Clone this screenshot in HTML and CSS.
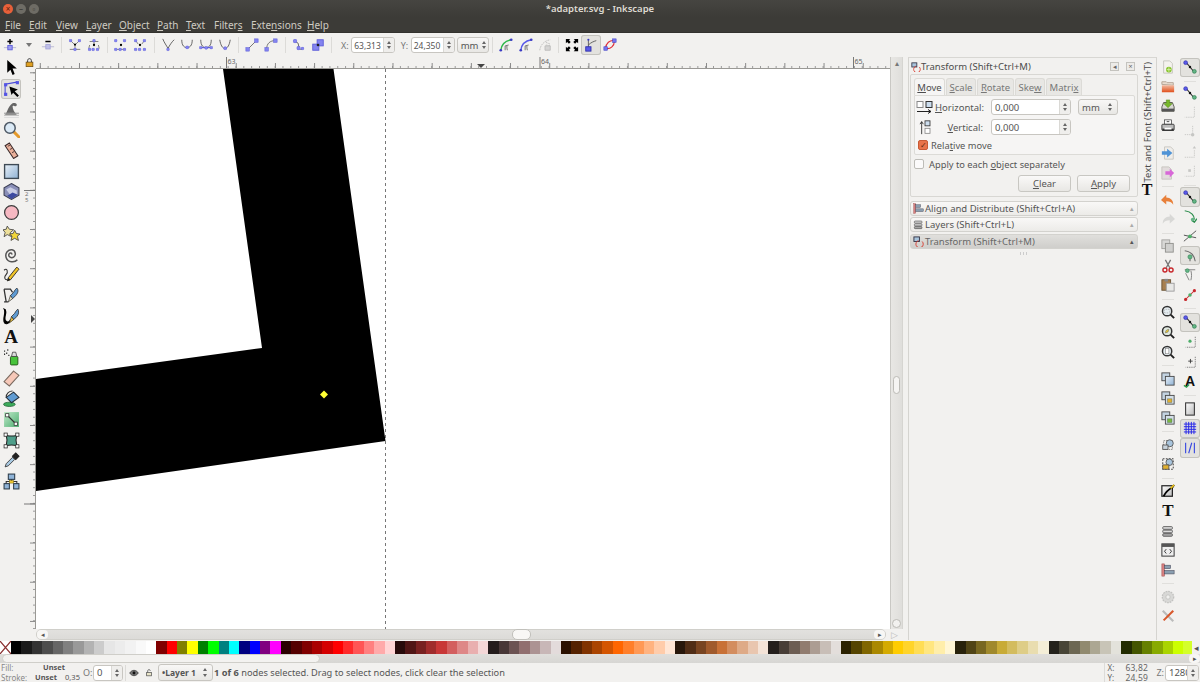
FILE: index.html
```html
<!DOCTYPE html>
<html lang="en">
<head>
<meta charset="utf-8">
<title>*adapter.svg - Inkscape</title>
<link rel="stylesheet" href="styles.css">
</head>
<body>
<svg class="sprite" xmlns="http://www.w3.org/2000/svg">
<defs>
<linearGradient id="gb" x1="0" y1="0" x2="1" y2="1"><stop offset="0" stop-color="#e8f0f8"/><stop offset="1" stop-color="#8fb2d4"/></linearGradient>
<linearGradient id="gg" x1="0" y1="0" x2="1" y2="1"><stop offset="0" stop-color="#bfe8c8"/><stop offset="1" stop-color="#4fae72"/></linearGradient>
<linearGradient id="go" x1="0" y1="0" x2="0" y2="1"><stop offset="0" stop-color="#f2b9a0"/><stop offset="1" stop-color="#e0501c"/></linearGradient>
<linearGradient id="gd" x1="0" y1="0" x2="1" y2="1"><stop offset="0" stop-color="#fff"/><stop offset="1" stop-color="#bbb"/></linearGradient>
<symbol id="dot" viewBox="0 0 4 4"><circle cx="2" cy="2" r="1.7" fill="#8484f0" stroke="#5a5ad8" stroke-width=".5"/></symbol>

<symbol id="n-add" viewBox="0 0 16 16"><path d="M8 1v6M5 4h6" stroke="#000" stroke-width="1.700"/><path d="M1 11h14" stroke="#b4b4d0"/><rect x="5.500" y="8.500" width="5" height="5" fill="#9c9cf2" stroke="#5a5ad8"/></symbol>
<symbol id="n-del" viewBox="0 0 16 16"><path d="M5 4h6" stroke="#000" stroke-width="1.700"/><path d="M1 10h14" stroke="#b4b4d0"/><rect x="5.500" y="7.500" width="5" height="5" fill="#c0c0e8" stroke="#a4a4d8"/></symbol>
<symbol id="n-join" viewBox="0 0 16 16"><path d="M3 3 8 8l5-5M8 8v4M2 13h12" stroke="#555" fill="none" stroke-width=".8"/><use href="#dot" x="1" y="1" width="4" height="4"/><use href="#dot" x="11" y="1" width="4" height="4"/><use href="#dot" x="6" y="11" width="4" height="4"/><circle cx="8" cy="7.500" r="1.300"/></symbol>
<symbol id="n-break" viewBox="0 0 16 16"><path d="M8 2v5M3 4h10M3 8l-1 4M13 8l1 4" stroke="#555" fill="none" stroke-width=".8"/><use href="#dot" x="6" y="1" width="4" height="4"/><use href="#dot" x="1" y="11" width="4" height="4"/><use href="#dot" x="5" y="11" width="4" height="4"/><use href="#dot" x="10" y="11" width="4" height="4"/><circle cx="8" cy="8" r="1.300"/></symbol>
<symbol id="n-joinseg" viewBox="0 0 16 16"><path d="M3 13H13" stroke="#555" stroke-width=".8"/><use href="#dot" x="0" y="1" width="4" height="4"/><use href="#dot" x="10" y="1" width="4" height="4"/><use href="#dot" x="0" y="11" width="4" height="4"/><use href="#dot" x="5" y="11" width="4" height="4"/><use href="#dot" x="10" y="11" width="4" height="4"/><circle cx="8" cy="8" r="1.300"/></symbol>
<symbol id="n-delseg" viewBox="0 0 16 16"><path d="M3 3l3 4M13 3l-3 4" stroke="#555" stroke-width=".8"/><use href="#dot" x="1" y="1" width="4" height="4"/><use href="#dot" x="11" y="1" width="4" height="4"/><use href="#dot" x="1" y="11" width="4" height="4"/><use href="#dot" x="5.500" y="11" width="4" height="4"/><use href="#dot" x="11" y="11" width="4" height="4"/><circle cx="8" cy="8" r="1.300"/></symbol>
<symbol id="c-cusp" viewBox="0 0 16 16"><path d="M2 1c2 5 4 7 6 11M15 2c-3 3-5 6-7 10" stroke="#555" fill="none"/><use href="#dot" x="6" y="11" width="4" height="4"/></symbol>
<symbol id="c-smooth" viewBox="0 0 16 16"><path d="M2 2c0 7 3 9 6 9s6-2 6-9" stroke="#555" fill="none"/><use href="#dot" x="6" y="8.500" width="4.400" height="4.400"/></symbol>
<symbol id="c-sym" viewBox="0 0 16 16"><path d="M2 2c0 7 3 9 6 9s6-2 6-9" stroke="#555" fill="none"/><path d="M2 11h12" stroke="#5a5ad8" stroke-width="1.300"/><use href="#dot" x="0" y="9" width="4" height="4"/><use href="#dot" x="6" y="9" width="4.400" height="4.400"/><use href="#dot" x="12" y="9" width="4" height="4"/></symbol>
<symbol id="c-auto" viewBox="0 0 16 16"><path d="M2 2c1 6 3 10 6 10s5-4 6-10" stroke="#555" fill="none"/><use href="#dot" x="6" y="9.500" width="4.400" height="4.400"/></symbol>
<symbol id="s-line" viewBox="0 0 16 16"><path d="M3 13 13 3" stroke="#666" stroke-width="1"/><rect x="1" y="11" width="4" height="4" fill="#8484f0" stroke="#5a5ad8" stroke-width=".6"/><rect x="11" y="1" width="4" height="4" fill="#8484f0" stroke="#5a5ad8" stroke-width=".6"/></symbol>
<symbol id="s-curve" viewBox="0 0 16 16"><path d="M3 13C3 6 7 3 13 3" stroke="#666" fill="none"/><rect x="1" y="11" width="4" height="4" fill="#8484f0" stroke="#5a5ad8" stroke-width=".6"/><rect x="11" y="1" width="4" height="4" fill="#8484f0" stroke="#5a5ad8" stroke-width=".6"/></symbol>
<symbol id="o-topath" viewBox="0 0 16 16"><path d="M4 4l3 2 1 5c1 3 4 2 4 1" stroke="#555" fill="none"/><use href="#dot" x="1" y="1" width="5" height="5"/><use href="#dot" x="5" y="9" width="5" height="5"/><use href="#dot" x="10" y="10" width="4" height="4"/></symbol>
<symbol id="o-stroke" viewBox="0 0 16 16"><rect x="7" y="2" width="7" height="7" fill="#8484f0" stroke="#5a5ad8"/><rect x="2" y="7" width="7" height="7" fill="#8484f0" stroke="#5a5ad8"/><circle cx="8" cy="8" r="1.500" fill="#222"/></symbol>
<symbol id="e-path" viewBox="0 0 16 16"><path d="M2 14C3 7 8 3 14 2" stroke="#2fb84b" fill="none" stroke-width="1.600"/><path d="M7 14V9l4-1M9 9c0 2 0 3 .5 5" stroke="#666" fill="none"/><circle cx="2" cy="14" r="1.500" fill="#3a3ac4"/><circle cx="14" cy="2" r="1.500" fill="#3a3ac4"/></symbol>
<symbol id="e-mask" viewBox="0 0 16 16"><path d="M2 14C3 7 8 3 14 2" stroke="#5858e8" fill="none" stroke-width="1.600"/><path d="M7 14V9l4-1M9 9c0 2 0 3 .5 5" stroke="#666" fill="none"/><circle cx="2" cy="14" r="1.500" fill="#3a3ac4"/><circle cx="14" cy="2" r="1.500" fill="#3a3ac4"/></symbol>
<symbol id="e-lpe" viewBox="0 0 16 16" opacity=".5"><path d="M2 14C3 7 8 3 14 2M9 5l5 2M9 8l5 1" stroke="#888" fill="none" stroke-dasharray="2 1"/><path d="M8 14V9h6v5z" fill="#bbb" stroke="#888"/></symbol>
<symbol id="v-trans" viewBox="0 0 16 16"><path d="M1 1l5 0-1.500 1.500 2 2-2 2-2-2L1 6zM15 1v5l-1.500-1.500-2 2-2-2 2-2L10 1zM1 15v-5l1.500 1.500 2-2 2 2-2 2L6 15zM15 15h-5l1.500-1.500-2-2 2-2 2 2L15 10z" fill="#000"/></symbol>
<symbol id="v-handle" viewBox="0 0 16 16"><path d="M5 11V2M5 8c3-3 6-4 9-5" stroke="#555" fill="none"/><rect x="2" y="10" width="6" height="5" fill="#5a5ae8" stroke="#2c2ca8"/><circle cx="5" cy="2" r="1.200" fill="#3a3ac4"/></symbol>
<symbol id="v-outline" viewBox="0 0 16 16"><path d="M3 12C3 6 8 2 13 3c0 6-4 10-10 9z" fill="none" stroke="#e0303a" stroke-width="1.300"/><rect x="1" y="10" width="4" height="4" fill="#7474ee" stroke="#3a3ac4" stroke-width=".6"/><rect x="11" y="1" width="4" height="4" fill="#7474ee" stroke="#3a3ac4" stroke-width=".6"/></symbol>

<symbol id="t-select" viewBox="0 0 16 16"><path d="M4 1v12l3-3 2 5 2-1-2-5h4z"/></symbol>
<symbol id="t-node" viewBox="0 0 16 16"><path d="M2 14V4l11-2" stroke="#4848d8" fill="none"/><rect x="1" y="3" width="3" height="3" fill="#5454e4"/><rect x="12" y="1" width="3" height="3" fill="#5454e4"/><rect x="1" y="12" width="3" height="3" fill="#5454e4"/><path d="M6 6l8 3-3 1.500 4 4-1.500 1.500-4-4L8 14z"/></symbol>
<symbol id="t-tweak" viewBox="0 0 16 16"><path d="M1 13C4 13 4 5 9 2c4-1 5 2 3 3-2 0-2-1-3 0 0 3 2 6 4 8z" fill="#666"/><rect x="1" y="11" width="14" height="1" fill="#999"/><rect x="1" y="13" width="14" height="1" fill="#bbb"/><rect x="1" y="15" width="14" height="1" fill="#ddd"/></symbol>
<symbol id="t-zoom" viewBox="0 0 16 16"><path d="M10 10l5 5" stroke="#e49a2c" stroke-width="2.800" stroke-linecap="round"/><circle cx="6.500" cy="6.500" r="5" fill="#dbeaf6" stroke="#4f5a66" stroke-width="1.400"/></symbol>
<symbol id="t-measure" viewBox="0 0 16 16"><path d="M6 1l8 12-4 2.500L2 3.500z" fill="#eab09a" stroke="#3a2a2a"/><path d="M4.500 4l2-1M6.500 7l2-1M8.500 10l2-1" stroke="#3a2a2a" stroke-width=".8"/></symbol>
<symbol id="t-rect" viewBox="0 0 16 16"><rect x="1.500" y="1.500" width="13" height="13" fill="url(#gb)" stroke="#3e4a55" stroke-width="1.300"/></symbol>
<symbol id="t-3d" viewBox="0 0 16 16"><path d="M8 .5l7 4v7l-7 4-7-4v-7z" fill="#8a8fb8" stroke="#3d4055"/><path d="M3 6l4-2 6 3v4l-5 3-2-4z" fill="#c8cce4"/><path d="M4 12l5-3 5 2-6 4z" fill="#3c4aa0"/></symbol>
<symbol id="t-circle" viewBox="0 0 16 16"><circle cx="8" cy="8" r="6.500" fill="#f6b8c2" stroke="#3e3e3e" stroke-width="1.200"/></symbol>
<symbol id="t-star" viewBox="0 0 16 16"><path d="M4 1l2 3 4 .5-3 2.500 1 4-4-2-3 2 1-4-2-2.500 3-.5z" fill="#eee09a" stroke="#444" stroke-width=".8"/><path d="M11 5l1.500 3 3.500.5-2.500 2 1 4-3.500-2-3.500 2 1-4-2.500-2 3.500-.5z" fill="#f2d63a" stroke="#444" stroke-width=".8"/></symbol>
<symbol id="t-spiral" viewBox="0 0 16 16"><path d="M8 8c1-1.500-2-2-2.500 0s2 4 4.500 2.500 2-6.500-1.500-7-7 3-5.500 7.500 8 5 10.500 2" fill="none" stroke="#555" stroke-width="1.400"/></symbol>
<symbol id="t-pencil" viewBox="0 0 16 16"><path d="M1 4c3-3 4 2 2 4s-2 5 1 5" fill="none" stroke="#333"/><path d="M13 1l2 2-8 10-3 1 1-3z" fill="#f0c428" stroke="#222" stroke-width=".8"/><path d="M4 14l1-3 2 2z" fill="#222"/></symbol>
<symbol id="t-pen" viewBox="0 0 16 16"><path d="M1 2h6l2 3M3 14L1 2M1 14h4" fill="none" stroke="#333" stroke-width="1.200"/><path d="M13 1c2 2 1 5-1 7l-3 3-1-1-1-2 3-3c1-2 2-3 3-4z" fill="#5f9bd2" stroke="#222" stroke-width=".7"/><path d="M7 8l2 3-4 3z" fill="#e8e4c8" stroke="#222" stroke-width=".6"/></symbol>
<symbol id="t-callig" viewBox="0 0 16 16"><path d="M1 1c4 1 0 6 1 10 1 3 4 3 5 0-1 4-5 5-6 2C0 8 3 4 1 1z" fill="#000" stroke="#000" stroke-width="1"/><path d="M14 1c1 2 1 5-1 7l-3 3-2-3 3-3c1-2 2-3 3-4z" fill="#5f9bd2" stroke="#222" stroke-width=".7"/><path d="M8 8l2 3-4 3z" fill="#e8c040" stroke="#222" stroke-width=".6"/></symbol>
<symbol id="t-spray" viewBox="0 0 16 16"><rect x="7" y="7" width="7" height="8" rx="1" fill="#47c23a" stroke="#1c4c12" stroke-width=".8"/><path d="M9 3h3l1 4H8z" fill="#ddd" stroke="#333" stroke-width=".7"/><path d="M1 2h1M3 4h1M1 5h1M4 1h1M5 6h1" stroke="#222" stroke-width="1.300"/></symbol>
<symbol id="t-eraser" viewBox="0 0 16 16"><path d="M10 1l5 4-9 10-5-4z" fill="#f6c8b8" stroke="#7a6a60"/></symbol>
<symbol id="t-bucket" viewBox="0 0 16 16"><ellipse cx="6" cy="13.500" rx="5.500" ry="2" fill="#3cab5a" stroke="#1d5e30" stroke-width=".7"/><path d="M3 7l7-5 5 5-7 5z" fill="#5f9bd2" stroke="#22303e"/><path d="M3 7c0-4 3-6 6-6" fill="none" stroke="#333"/></symbol>
<symbol id="t-grad" viewBox="0 0 16 16"><rect x="1" y="1" width="14" height="14" fill="url(#gg)"/><path d="M4 4l8 8" stroke="#333"/><rect x="2.500" y="2.500" width="3" height="3" fill="#fff" stroke="#333" stroke-width=".7"/><rect x="10.500" y="10.500" width="3" height="3" fill="#fff" stroke="#333" stroke-width=".7"/></symbol>
<symbol id="t-mesh" viewBox="0 0 16 16"><path d="M3 3c3 1 7 1 10 0-1 3-1 7 0 10-3-1-7-1-10 0 1-3 1-7 0-10z" fill="#4f9e8a" stroke="#222"/><g fill="#fff" stroke="#222" stroke-width=".7"><rect x="1" y="1" width="3" height="3"/><rect x="12" y="1" width="3" height="3"/><rect x="1" y="12" width="3" height="3"/><rect x="12" y="12" width="3" height="3"/></g></symbol>
<symbol id="t-dropper" viewBox="0 0 16 16"><path d="M2 14l1-3 6-6 2 2-6 6z" fill="#a8c8e0" stroke="#333" stroke-width=".8"/><path d="M9 4l3-3 3 3-3 3z" fill="#222" stroke="#222"/></symbol>
<symbol id="t-conn" viewBox="0 0 16 16"><path d="M8 5v3M3 11V8h10v3" fill="none" stroke="#333"/><rect x="5" y="1" width="6" height="5" fill="#8fb4d8" stroke="#2d3c4a"/><rect x="6" y="7" width="4" height="2.500" fill="#f0c830" stroke="#7a6a10" stroke-width=".5"/><rect x="1" y="10" width="5" height="5" fill="#8fb4d8" stroke="#2d3c4a"/><rect x="10" y="10" width="5" height="5" fill="#8fb4d8" stroke="#2d3c4a"/></symbol>

<symbol id="r-new" viewBox="0 0 16 16"><path d="M3 1h7l3 3v11H3z" fill="#f4f2ee" stroke="#c4c2bc"/><circle cx="9" cy="11" r="3.200" fill="#86c42c"/><path d="M9 8.500v5M6.500 11h5" stroke="#d8f0a8"/></symbol>
<symbol id="r-open" viewBox="0 0 16 16"><path d="M1 5V2h5l1 1h7v3z" fill="#e8dcd0" stroke="#b0a090"/><rect x="1" y="6" width="14" height="8" fill="url(#go)"/></symbol>
<symbol id="r-save" viewBox="0 0 16 16"><path d="M1 9l2-5h10l2 5v5H1z" fill="#d8d8d2" stroke="#505048"/><rect x="1" y="11" width="14" height="3" fill="#555"/><path d="M6 1h4v4h3l-5 5-5-5h3z" fill="#76b82a" stroke="#4c8010" stroke-width=".5"/></symbol>
<symbol id="r-print" viewBox="0 0 16 16"><rect x="4" y="1" width="8" height="5" fill="#fff" stroke="#333" stroke-width=".8"/><rect x="1" y="6" width="14" height="7" rx="1" fill="#bbb" stroke="#333"/><rect x="1.500" y="11" width="13" height="2.500" fill="#333"/><rect x="4" y="10" width="8" height="2" fill="#fff"/><path d="M6.500 3h3" stroke="#333"/></symbol>
<symbol id="r-import" viewBox="0 0 16 16"><path d="M4 1h7l3 3v11H4z" fill="#efedea" stroke="#c6c4be"/><path d="M1 6h6V3l6 5-6 5v-3H1z" fill="#4f93d6"/></symbol>
<symbol id="r-export" viewBox="0 0 16 16"><path d="M1 1h8l3 3v11H1z" fill="#e2dcdc" stroke="#c6c4be"/><path d="M5 6h5V3l5 5-5 5v-3H5z" fill="#d868d8"/></symbol>
<symbol id="r-undo" viewBox="0 0 16 16"><path d="M6 2L0 8l6 5V9.500c4 0 6 1 8 4 0-6-3-8-8-8.500z" fill="#e8803a"/></symbol>
<symbol id="r-redo" viewBox="0 0 16 16"><path d="M10 2l6 6-6 5V9.500c-4 0-6 1-8 4 0-6 3-8 8-8.500z" fill="#d8d8d6"/></symbol>
<symbol id="r-copy" viewBox="0 0 16 16"><rect x="1" y="1" width="9" height="10" fill="#d8d8d6" stroke="#a0a09c"/><rect x="5" y="5" width="9" height="10" fill="#d0d0ce" stroke="#8e8e8a"/></symbol>
<symbol id="r-cut" viewBox="0 0 16 16"><path d="M5 1l5 9M11 1L6 10" stroke="#777" stroke-width="1.500"/><circle cx="4.500" cy="12.500" r="2.300" fill="none" stroke="#c8282c" stroke-width="1.600"/><circle cx="11.500" cy="12.500" r="2.300" fill="none" stroke="#c8282c" stroke-width="1.600"/></symbol>
<symbol id="r-paste" viewBox="0 0 16 16"><rect x="1" y="2" width="10" height="12" fill="#a88050" stroke="#685030"/><rect x="4" y="1" width="4" height="3" fill="#888"/><rect x="6" y="6" width="9" height="9" fill="#e8e8e6" stroke="#999"/></symbol>
<symbol id="r-z1" viewBox="0 0 16 16"><circle cx="7" cy="7" r="5.300" fill="#e4ecf0" stroke="#333" stroke-width="1.700"/><path d="M11 11l4 4" stroke="#222" stroke-width="2.200"/><rect x="4" y="5" width="6" height="4" fill="none" stroke="#999" stroke-width=".7" stroke-dasharray="1 1"/></symbol>
<symbol id="r-z2" viewBox="0 0 16 16"><circle cx="7" cy="7" r="5.300" fill="#dfe8e0" stroke="#333" stroke-width="1.700"/><path d="M11 11l4 4" stroke="#222" stroke-width="2.200"/><path d="M5 9c0-3 2-4 4-4l-1 3z" fill="#e8c838" stroke="#555" stroke-width=".5"/></symbol>
<symbol id="r-z3" viewBox="0 0 16 16"><circle cx="7" cy="7" r="5.300" fill="#e4ecf0" stroke="#333" stroke-width="1.700"/><path d="M11 11l4 4" stroke="#222" stroke-width="2.200"/><rect x="5" y="4" width="4" height="6" fill="#fff" stroke="#888" stroke-width=".7"/></symbol>
<symbol id="r-dup" viewBox="0 0 16 16"><rect x="1" y="1" width="9" height="9" fill="#c4d4e2" stroke="#444"/><rect x="5" y="5" width="10" height="10" fill="url(#gb)" stroke="#444"/></symbol>
<symbol id="r-clone" viewBox="0 0 16 16"><rect x="1" y="1" width="9" height="9" fill="#c4d4e2" stroke="#444"/><rect x="5" y="5" width="10" height="10" fill="#d4dfe8" stroke="#444"/><rect x="7.500" y="9" width="5" height="4" fill="#e0b030" stroke="#664" stroke-width=".5"/></symbol>
<symbol id="r-unclone" viewBox="0 0 16 16"><rect x="1" y="1" width="9" height="9" fill="#c4d4e2" stroke="#444"/><rect x="5" y="5" width="10" height="10" fill="#d4dfe8" stroke="#444"/><rect x="7.500" y="9" width="5" height="4" fill="#7cb840" stroke="#464" stroke-width=".5"/></symbol>
<symbol id="r-group" viewBox="0 0 16 16"><path d="M3 3h10v10H3z" fill="none" stroke="#777" stroke-dasharray="1.500 1"/><circle cx="10" cy="6" r="4" fill="#a8c4dc" stroke="#555"/><rect x="2" y="8" width="6" height="5" fill="#c8d4de" stroke="#555"/></symbol>
<symbol id="r-ungroup" viewBox="0 0 16 16"><path d="M2 2h12v12H2z" fill="none" stroke="#333" stroke-dasharray="2 1.500"/><circle cx="9.500" cy="6" r="3.800" fill="#a8c4dc" stroke="#555"/><rect x="2" y="9" width="7" height="5" fill="#e0b030" stroke="#555"/></symbol>
<symbol id="r-fill" viewBox="0 0 16 16"><rect x="1" y="2" width="12" height="12" fill="url(#gd)" stroke="#222" stroke-width="1.400"/><path d="M3 14c2-4 6-8 10-10L15 1" stroke="#000" stroke-width="2" fill="none"/><path d="M11 5l4-4" stroke="#e8c020" stroke-width="2"/></symbol>
<symbol id="r-layers" viewBox="0 0 16 16"><g fill="#ddd" stroke="#555"><rect x="2" y="3" width="11" height="3" rx="1"/><rect x="2" y="7" width="11" height="3" rx="1"/><rect x="2" y="11" width="11" height="3" rx="1" fill="#aaa"/></g></symbol>
<symbol id="r-xml" viewBox="0 0 16 16"><rect x="1" y="1" width="14" height="14" fill="#eee" stroke="#444" stroke-width="1.200"/><rect x="1" y="1" width="14" height="3.500" fill="#555"/><path d="M6 7L4 9.500 6 12M10 7l2 2.500-2 2.500" stroke="#222" fill="none"/></symbol>
<symbol id="r-align" viewBox="0 0 16 16"><rect x="1" y="1" width="3" height="14" fill="#d88080" stroke="#a05050" stroke-width=".6"/><rect x="4" y="2.500" width="7" height="4" fill="#8a9eb0" stroke="#445" stroke-width=".6"/><rect x="4" y="8.500" width="11" height="4" fill="#8a9eb0" stroke="#445" stroke-width=".6"/></symbol>
<symbol id="r-gear" viewBox="0 0 16 16"><circle cx="8" cy="8" r="6.500" fill="#d8d8d6" stroke="#c2c2c0" stroke-width="1.500" stroke-dasharray="2 1"/><circle cx="8" cy="8" r="2.500" fill="#f0f0ee" stroke="#c2c2c0"/></symbol>
<symbol id="r-tools" viewBox="0 0 16 16"><path d="M2 2l12 12" stroke="#bbb" stroke-width="2.400"/><path d="M14 2L3 13" stroke="#d8582c" stroke-width="2.400"/></symbol>

<symbol id="sn-main" viewBox="0 0 16 16"><path d="M3 2l10 12" stroke="#222" stroke-width="1.200"/><circle cx="8" cy="8" r="1.400" fill="#111"/><circle cx="3" cy="3" r="2.200" fill="#5a5ae8" stroke="#2c2ca8" stroke-width=".7"/><circle cx="13" cy="13" r="2.200" fill="#62b484" stroke="#2d7a4c" stroke-width=".7"/></symbol>
<symbol id="sn-bb" viewBox="0 0 16 16"><path d="M13 2v12H2" fill="none" stroke="#c6c6c4" stroke-dasharray="1.500 1"/></symbol>
<symbol id="sn-bbe" viewBox="0 0 16 16"><path d="M11 1v10H1" fill="none" stroke="#c6c6c4" stroke-dasharray="1.500 1"/><circle cx="11" cy="11" r="2" fill="#c6c6c4"/></symbol>
<symbol id="sn-bbm" viewBox="0 0 16 16"><path d="M13 6v8H2" fill="none" stroke="#c6c6c4" stroke-dasharray="1.500 1"/><path d="M13 1l2 3h-4z" fill="#c6c6c4"/></symbol>
<symbol id="sn-bbc" viewBox="0 0 16 16"><path d="M13 2v12H2" fill="none" stroke="#c6c6c4" stroke-dasharray="1.500 1"/><rect x="6" y="6" width="3" height="3" fill="#c6c6c4"/></symbol>
<symbol id="sn-path" viewBox="0 0 16 16"><path d="M2 2c8 1 11 6 11 10" fill="none" stroke="#2c8c4c" stroke-width="1.400"/><path d="M10 13l3 2 3-4" fill="none" stroke="#2c8c4c" stroke-width="1.600"/><circle cx="11" cy="12" r="2" fill="#62b484"/></symbol>
<symbol id="sn-int" viewBox="0 0 16 16"><path d="M1 14L15 2M1 7l14 3" stroke="#444"/><circle cx="8" cy="8.500" r="2.200" fill="#4cae68"/></symbol>
<symbol id="sn-norm" viewBox="0 0 16 16"><path d="M2 2c7 1 11 5 12 12M8 14V8" fill="none" stroke="#666" stroke-width="1.200"/><circle cx="8" cy="9" r="2.400" fill="#62b484" stroke="#2d7a4c" stroke-width=".6"/></symbol>
<symbol id="sn-tan" viewBox="0 0 16 16"><path d="M2 2h12M9 3c1 4 1 7 0 11M3 6l4 8" stroke="#777" fill="none"/><circle cx="5" cy="3" r="2.200" fill="#62b484" stroke="#2d7a4c" stroke-width=".6"/></symbol>
<symbol id="sn-cusp" viewBox="0 0 16 16"><path d="M2 14L14 2" stroke="#c8282c" stroke-width="1.200"/><circle cx="3" cy="13" r="1.800" fill="#c8282c"/><circle cx="8" cy="8" r="2" fill="#4cae68"/><circle cx="13" cy="3" r="1.800" fill="#c8282c"/></symbol>
<symbol id="sn-cen" viewBox="0 0 16 16"><path d="M14 2v12H3" fill="none" stroke="#777" stroke-dasharray="1.500 1"/><circle cx="8" cy="7" r="1.800" fill="#4cae68"/></symbol>
<symbol id="sn-rot" viewBox="0 0 16 16"><path d="M14 2v12H3" fill="none" stroke="#777" stroke-dasharray="1.500 1"/><path d="M6 7h5M8.500 4.500v5" stroke="#333"/></symbol>
<symbol id="sn-text" viewBox="0 0 16 16"><text x="8" y="14" text-anchor="middle" font-family="Liberation Sans" font-weight="700" font-size="16" fill="#111">A</text><path d="M1 13l3 2 3-3" fill="none" stroke="#2c9c4c" stroke-width="1.500"/></symbol>
<symbol id="sn-page" viewBox="0 0 16 16"><rect x="3" y="1" width="10" height="14" fill="url(#gd)" stroke="#333" stroke-width="1.200"/></symbol>
<symbol id="sn-grid" viewBox="0 0 16 16"><path d="M3.500 1v14M6.500 1v14M9.500 1v14M12.500 1v14M1 3.500h14M1 6.500h14M1 9.500h14M1 12.500h14" stroke="#2424e8" stroke-width="1.100"/></symbol>
<symbol id="sn-guide" viewBox="0 0 16 16"><path d="M3 2v12M6.500 14L10 2M13 2v12" stroke="#3a4ae0" stroke-width="1.300"/></symbol>
<symbol id="p-move-h" viewBox="0 0 18 14"><rect x="1" y="1" width="6" height="6" fill="#fff" stroke="#888"/><rect x="10" y="1" width="6" height="6" fill="#cde" stroke="#333"/><path d="M1 11h14M12 9l3 2-3 2" fill="none" stroke="#222"/></symbol>
<symbol id="p-move-v" viewBox="0 0 16 18"><rect x="8" y="1" width="6" height="6" fill="#cde" stroke="#333"/><rect x="8" y="10" width="6" height="6" fill="#fff" stroke="#888"/><path d="M4 17V2M2 5l2-3 2 3" fill="none" stroke="#222"/></symbol>
<symbol id="p-transform" viewBox="0 0 12 12"><rect x="1" y="1" width="6" height="5" fill="#a8c4dc" stroke="#334"/><path d="M10 6a4 4 0 1 1-4-1" fill="none" stroke="#d8382c"/></symbol>
<symbol id="p-eye" viewBox="0 0 14 10"><path d="M1 5c3-5 9-5 12 0-3 5-9 5-12 0z" fill="#777" stroke="#333"/><circle cx="7" cy="5" r="2" fill="#111"/></symbol>
<symbol id="p-lock" viewBox="0 0 12 12"><rect x="2.500" y="6" width="7" height="5" fill="#e8e4c8" stroke="#444"/><path d="M4 6V3.500C4 1 8 1 8 3.500" fill="none" stroke="#444"/></symbol>
<symbol id="p-rlock" viewBox="0 0 12 12"><rect x="1.500" y="5.500" width="9" height="6" fill="#e0a020" stroke="#6a4a10"/><path d="M3.500 5.500V3.500C3.500 0 8.500 0 8.500 3.500v2" fill="none" stroke="#333" stroke-width="1.300"/></symbol>
</defs>
</svg>

<div class="app">
  <header class="titlebar">
    <div class="winbtns"><span class="wb wb-close">×</span><span class="wb">–</span><span class="wb">▫</span></div>
    <div class="wintitle">*adapter.svg - Inkscape</div>
  </header>
  <nav class="menubar">
    <span class="m m1"><u>F</u>ile</span><span class="m m2"><u>E</u>dit</span><span class="m m3"><u>V</u>iew</span><span class="m m4"><u>L</u>ayer</span><span class="m m5"><u>O</u>bject</span><span class="m m6"><u>P</u>ath</span><span class="m m7"><u>T</u>ext</span><span class="m m8">Filter<u>s</u></span><span class="m m9">Exte<u>n</u>sions</span><span class="m m10"><u>H</u>elp</span>
  </nav>
  <div class="toolbar">
    <span class="ti"><svg class="i16"><use href="#n-add"/></svg></span><span class="ti"><span class="ddarrow"></span></span><span class="ti"><svg class="i16"><use href="#n-del"/></svg></span><i class="vsep"></i>
    <span class="ti"><svg class="i16"><use href="#n-join"/></svg></span><span class="ti"><svg class="i16"><use href="#n-break"/></svg></span><i class="vsep"></i>
    <span class="ti"><svg class="i16"><use href="#n-joinseg"/></svg></span><span class="ti"><svg class="i16"><use href="#n-delseg"/></svg></span><i class="vsep"></i>
    <span class="ti"><svg class="i16"><use href="#c-cusp"/></svg></span><span class="ti"><svg class="i16"><use href="#c-smooth"/></svg></span><span class="ti"><svg class="i16"><use href="#c-sym"/></svg></span><span class="ti"><svg class="i16"><use href="#c-auto"/></svg></span><i class="vsep"></i>
    <span class="ti"><svg class="i16"><use href="#s-line"/></svg></span><span class="ti"><svg class="i16"><use href="#s-curve"/></svg></span><i class="vsep"></i>
    <span class="ti"><svg class="i16"><use href="#o-topath"/></svg></span><span class="ti"><svg class="i16"><use href="#o-stroke"/></svg></span><i class="vsep"></i>
    <span class="flabel fl-x">X:</span><span class="spin sw-coord"><b>63,313</b><em></em></span>
    <span class="flabel fl-x">Y:</span><span class="spin sw-coord"><b>24,350</b><em></em></span>
    <span class="drop sw-unit">mm<em></em></span><i class="vsep"></i>
    <span class="ti"><svg class="i16"><use href="#e-path"/></svg></span><span class="ti"><svg class="i16"><use href="#e-mask"/></svg></span><span class="ti"><svg class="i16"><use href="#e-lpe"/></svg></span><i class="vsep"></i>
    <span class="ti"><svg class="i16"><use href="#v-trans"/></svg></span><span class="ti on"><svg class="i16"><use href="#v-handle"/></svg></span><span class="ti"><svg class="i16"><use href="#v-outline"/></svg></span>
  </div>

  <div class="middle">
    <aside class="tools">
      <span class="tl"><svg class="i16"><use href="#t-select"/></svg></span>
      <span class="tl on"><svg class="i16"><use href="#t-node"/></svg></span>
      <span class="tl"><svg class="i16"><use href="#t-tweak"/></svg></span>
      <span class="tl"><svg class="i16"><use href="#t-zoom"/></svg></span>
      <span class="tl"><svg class="i16"><use href="#t-measure"/></svg></span>
      <span class="tl"><svg class="i16"><use href="#t-rect"/></svg></span>
      <span class="tl"><svg class="i16"><use href="#t-3d"/></svg></span>
      <span class="tl"><svg class="i16"><use href="#t-circle"/></svg></span>
      <span class="tl"><svg class="i16"><use href="#t-star"/></svg></span>
      <span class="tl"><svg class="i16"><use href="#t-spiral"/></svg></span>
      <span class="tl"><svg class="i16"><use href="#t-pencil"/></svg></span>
      <span class="tl"><svg class="i16"><use href="#t-pen"/></svg></span>
      <span class="tl"><svg class="i16"><use href="#t-callig"/></svg></span>
      <span class="tl glyph-a">A</span>
      <span class="tl"><svg class="i16"><use href="#t-spray"/></svg></span>
      <span class="tl"><svg class="i16"><use href="#t-eraser"/></svg></span>
      <span class="tl"><svg class="i16"><use href="#t-bucket"/></svg></span>
      <span class="tl"><svg class="i16"><use href="#t-grad"/></svg></span>
      <span class="tl"><svg class="i16"><use href="#t-mesh"/></svg></span>
      <span class="tl"><svg class="i16"><use href="#t-dropper"/></svg></span>
      <span class="tl"><svg class="i16"><use href="#t-conn"/></svg></span>
    </aside>

    <section class="work">
      <div class="corner"><svg class="i-lock"><use href="#p-rlock"/></svg></div>
      <div class="ruler-h">
        <span class="rl rl63">63</span><span class="rl rl64">64</span><span class="rl rl65">65</span>
        <span class="mark-h"></span>
      </div>
      <div class="vscroll">
        <span class="sb-arrow">▴</span>
        <span class="sb-thumb-v"></span>
        <span class="sb-round"></span>
      </div>
      <div class="ruler-v">
        <span class="rlv">2<br>5</span>
        <span class="mark-v"></span>
      </div>
      <div class="canvas">
        <svg class="drawing" viewBox="36 69 854 560">
          <rect x="36" y="69" width="854" height="560" fill="#fff"/>
          <polygon points="223,69 333.500,69 385.500,441 36,491 36,379 262,348" fill="#000"/>
          <path d="M385.500 69V629" stroke="#777" stroke-dasharray="3 3" fill="none"/>
          <polygon points="324,390.500 328,394.500 324,398.500 320,394.500" fill="#ffff33"/>
        </svg>
      </div>
      <div class="hcell"></div>
      <div class="hscroll"><span class="sb-btn">◂</span><span class="sb-thumb-h"></span><span class="sb-btn sb-end">▸</span></div>
      <div class="zcell">▷</div>
    </section>

    <aside class="dock">
      <div class="panel">
        <div class="panel-main">
          <div class="panel-head">
            <svg class="i10"><use href="#p-transform"/></svg><span class="ph-title">Transform (Shift+Ctrl+M)</span>
            <span class="ph-btn">◂</span><span class="ph-btn">×</span>
          </div>
          <div class="frame">
            <div class="tabs">
              <span class="tab act"><u>M</u>ove</span><span class="tab"><u>S</u>cale</span><span class="tab"><u>R</u>otate</span><span class="tab">Ske<u>w</u></span><span class="tab">Matri<u>x</u></span>
            </div>
            <div class="page">
              <div class="row">
                <svg class="i-mv"><use href="#p-move-h"/></svg><label class="lb"><u>H</u>orizontal:</label>
                <span class="spin sw-val"><b>0,000</b><em></em></span><span class="drop sw-dd">mm<em></em></span>
              </div>
              <div class="row">
                <svg class="i-mv"><use href="#p-move-v"/></svg><label class="lb"><u>V</u>ertical:</label>
                <span class="spin sw-val"><b>0,000</b><em></em></span>
              </div>
              <div class="chk-row"><span class="chk on">✓</span><span>Rela<u>t</u>ive move</span></div>
            </div>
            <div class="chk-row chk-out"><span class="chk"></span><span>Apply to each <u>o</u>bject separately</span></div>
            <div class="actions"><span class="btn"><span><u>C</u>lear</span></span><span class="btn"><span><u>A</u>pply</span></span></div>
          </div>
          <div class="dock-item"><svg class="i11"><use href="#r-align"/></svg>Align and Distribute (Shift+Ctrl+A)<span class="tri">▴</span></div>
          <div class="dock-item"><svg class="i11"><use href="#r-layers"/></svg>Layers (Shift+Ctrl+L)<span class="tri">▴</span></div>
          <div class="dock-item cur"><svg class="i11"><use href="#p-transform"/></svg>Transform (Shift+Ctrl+M)<span class="tri">▴</span></div>
          <div class="grip"></div>
        </div>
        <div class="vtab"><span class="vtab-t">Text and Font (Shift+Ctrl+T)</span><span class="glyph-t small">T</span></div>
      </div>
    </aside>

    <aside class="cmd">
      <span class="ci"><svg class="i16"><use href="#r-new"/></svg></span>
      <span class="ci"><svg class="i16"><use href="#r-open"/></svg></span>
      <span class="ci"><svg class="i16"><use href="#r-save"/></svg></span>
      <span class="ci"><svg class="i16"><use href="#r-print"/></svg></span><i class="hsep"></i>
      <span class="ci"><svg class="i16"><use href="#r-import"/></svg></span>
      <span class="ci"><svg class="i16"><use href="#r-export"/></svg></span><i class="hsep"></i>
      <span class="ci"><svg class="i16"><use href="#r-undo"/></svg></span>
      <span class="ci"><svg class="i16"><use href="#r-redo"/></svg></span><i class="hsep"></i>
      <span class="ci"><svg class="i16"><use href="#r-copy"/></svg></span>
      <span class="ci"><svg class="i16"><use href="#r-cut"/></svg></span>
      <span class="ci"><svg class="i16"><use href="#r-paste"/></svg></span><i class="hsep"></i>
      <span class="ci"><svg class="i16"><use href="#r-z1"/></svg></span>
      <span class="ci"><svg class="i16"><use href="#r-z2"/></svg></span>
      <span class="ci"><svg class="i16"><use href="#r-z3"/></svg></span><i class="hsep"></i>
      <span class="ci"><svg class="i16"><use href="#r-dup"/></svg></span>
      <span class="ci"><svg class="i16"><use href="#r-clone"/></svg></span>
      <span class="ci"><svg class="i16"><use href="#r-unclone"/></svg></span><i class="hsep"></i>
      <span class="ci"><svg class="i16"><use href="#r-group"/></svg></span>
      <span class="ci"><svg class="i16"><use href="#r-ungroup"/></svg></span><i class="hsep"></i>
      <span class="ci"><svg class="i16"><use href="#r-fill"/></svg></span>
      <span class="ci glyph-t">T</span>
      <span class="ci"><svg class="i16"><use href="#r-layers"/></svg></span>
      <span class="ci"><svg class="i16"><use href="#r-xml"/></svg></span>
      <span class="ci"><svg class="i16"><use href="#r-align"/></svg></span><i class="hsep"></i>
      <span class="ci"><svg class="i16"><use href="#r-gear"/></svg></span>
      <span class="ci"><svg class="i16"><use href="#r-tools"/></svg></span>
    </aside>

    <aside class="snap">
      <span class="si on"><svg class="i16"><use href="#sn-main"/></svg></span><i class="hsep s6"></i>
      <span class="si"><svg class="i16"><use href="#sn-main"/></svg></span>
      <span class="si"><svg class="i16"><use href="#sn-bb"/></svg></span>
      <span class="si"><svg class="i16"><use href="#sn-bbe"/></svg></span>
      <span class="si"><svg class="i16"><use href="#sn-bbm"/></svg></span>
      <span class="si"><svg class="i16"><use href="#sn-bbc"/></svg></span><i class="hsep s6"></i>
      <span class="si on"><svg class="i16"><use href="#sn-main"/></svg></span>
      <span class="si"><svg class="i16"><use href="#sn-path"/></svg></span>
      <span class="si"><svg class="i16"><use href="#sn-int"/></svg></span>
      <span class="si on"><svg class="i16"><use href="#sn-norm"/></svg></span>
      <span class="si"><svg class="i16"><use href="#sn-tan"/></svg></span>
      <span class="si"><svg class="i16"><use href="#sn-cusp"/></svg></span><i class="hsep s8"></i>
      <span class="si on"><svg class="i16"><use href="#sn-main"/></svg></span>
      <span class="si"><svg class="i16"><use href="#sn-cen"/></svg></span>
      <span class="si"><svg class="i16"><use href="#sn-rot"/></svg></span>
      <span class="si"><svg class="i16"><use href="#sn-text"/></svg></span><i class="hsep s8"></i>
      <span class="si"><svg class="i16"><use href="#sn-page"/></svg></span>
      <span class="si on"><svg class="i16"><use href="#sn-grid"/></svg></span>
      <span class="si on"><svg class="i16"><use href="#sn-guide"/></svg></span>
    </aside>
  </div>

  <div class="palette">
    <span class="nocolor"><svg class="x-mark" viewBox="0 0 11 13"><path d="M0 0l11 13M11 0L0 13" stroke="#8a3030" stroke-width="1.200"/></svg></span>
    <div class="swatches">
      <i style="background:#000000"></i><i style="background:#1a1a1a"></i><i style="background:#333333"></i><i style="background:#4d4d4d"></i><i style="background:#666666"></i><i style="background:#808080"></i><i style="background:#999999"></i><i style="background:#b3b3b3"></i><i style="background:#cccccc"></i><i style="background:#e6e6e6"></i><i style="background:#ececec"></i><i style="background:#f2f2f2"></i><i style="background:#f9f9f9"></i><i style="background:#ffffff"></i>
      <i style="background:#800000"></i><i style="background:#ff0000"></i><i style="background:#808000"></i><i style="background:#ffff00"></i><i style="background:#008000"></i><i style="background:#00ff00"></i><i style="background:#008080"></i><i style="background:#00ffff"></i><i style="background:#000080"></i><i style="background:#0000ff"></i><i style="background:#800080"></i><i style="background:#ff00ff"></i>
      <i style="background:#2b0000"></i><i style="background:#550000"></i><i style="background:#800000"></i><i style="background:#aa0000"></i><i style="background:#d40000"></i><i style="background:#ff0000"></i><i style="background:#ff2a2a"></i><i style="background:#ff5555"></i><i style="background:#ff8080"></i><i style="background:#ffaaaa"></i><i style="background:#ffd5d5"></i>
      <i style="background:#280b0b"></i><i style="background:#501616"></i><i style="background:#782121"></i><i style="background:#a02c2c"></i><i style="background:#c83737"></i><i style="background:#d35f5f"></i><i style="background:#de8787"></i><i style="background:#e9afaf"></i><i style="background:#f4d7d7"></i>
      <i style="background:#241c1c"></i><i style="background:#483737"></i><i style="background:#6c5353"></i><i style="background:#916f6f"></i><i style="background:#ac9393"></i><i style="background:#c8b7b7"></i><i style="background:#e3dbdb"></i>
      <i style="background:#2b1100"></i><i style="background:#552200"></i><i style="background:#803300"></i><i style="background:#aa4400"></i><i style="background:#d45500"></i><i style="background:#ff6600"></i><i style="background:#ff7f2a"></i><i style="background:#ff9955"></i><i style="background:#ffb380"></i><i style="background:#ffccaa"></i><i style="background:#ffe6d5"></i>
      <i style="background:#28170b"></i><i style="background:#502d16"></i><i style="background:#784421"></i><i style="background:#a05a2c"></i><i style="background:#c87137"></i><i style="background:#d38d5f"></i><i style="background:#deaa87"></i><i style="background:#e9c6af"></i><i style="background:#f4e3d7"></i>
      <i style="background:#241f1c"></i><i style="background:#483e37"></i><i style="background:#6c5d53"></i><i style="background:#917c6f"></i><i style="background:#ac9d93"></i><i style="background:#c8beb7"></i><i style="background:#e3dedb"></i>
      <i style="background:#2b2200"></i><i style="background:#554400"></i><i style="background:#806600"></i><i style="background:#aa8800"></i><i style="background:#d4aa00"></i><i style="background:#ffcc00"></i><i style="background:#ffd42a"></i><i style="background:#ffdd55"></i><i style="background:#ffe680"></i><i style="background:#ffeeaa"></i><i style="background:#fff6d5"></i>
      <i style="background:#28220b"></i><i style="background:#504416"></i><i style="background:#786721"></i><i style="background:#a0892c"></i><i style="background:#c8ab37"></i><i style="background:#d3bc5f"></i><i style="background:#decd87"></i><i style="background:#e9ddaf"></i><i style="background:#f4eed7"></i>
      <i style="background:#24221c"></i><i style="background:#484537"></i><i style="background:#6c6753"></i><i style="background:#918a6f"></i><i style="background:#aca793"></i><i style="background:#c8c4b7"></i><i style="background:#e3e2db"></i>
      <i style="background:#222b00"></i><i style="background:#445500"></i><i style="background:#668000"></i><i style="background:#88aa00"></i><i style="background:#aad400"></i><i style="background:#ccff00"></i><i style="background:#d4ff2a"></i>
    </div>
    <span class="pal-arrow">◂</span>
  </div>
  <div class="palscroll"><span class="ps-thumb"></span><span class="sb-btn sb-end">▸</span></div>

  <footer class="status">
    <div class="fs-labels"><span>Fill:</span><span>Stroke:</span></div>
    <div class="fs-vals"><b class="fv1">Unset</b><span class="fv2"><b>Unset</b><span class="sw">0,35</span></span></div>
    <span class="flabel fl-o">O:</span><span class="spin sw-o"><b>0</b><em></em></span><i class="vsep sm"></i>
    <svg class="i-eye"><use href="#p-eye"/></svg><svg class="i-lk"><use href="#p-lock"/></svg>
    <span class="drop sw-layer"><strong>•Layer 1</strong><em></em></span>
    <span class="msg"><b>1 of 6</b> nodes selected. Drag to select nodes, click clear the selection</span>
    <i class="spring"></i>
    <i class="vsep tall"></i>
    <div class="coords"><span>X:</span><span class="cv">63,82</span><span>Y:</span><span class="cv">24,59</span></div>
    <span class="flabel fl-z">Z:</span><span class="spin sw-z"><b>12800</b><em></em></span>
  </footer>
</div>
</body>
</html>
```
FILE: styles.css
```css
* { box-sizing: border-box; }
html, body { margin: 0; padding: 0; }
body { width: 1200px; height: 682px; overflow: hidden; background: #f2f1ef; font-family: "Noto Sans", "Open Sans", sans-serif; font-size: 9.500px; color: #4c4c4c; }
.sprite { display: block; width: 0; height: 0; overflow: hidden; }
.app { width: 1200px; height: 682px; display: flex; flex-direction: column; }
svg { display: block; flex: none; }
u { text-underline-offset: 1px; text-decoration-thickness: 1px; }
i { font-style: normal; }
.i16 { width: 16px; height: 16px; }
.i10 { width: 10px; height: 10px; margin-right: 0; }
.i11 { width: 11px; height: 11px; margin-right: 1px; }

.titlebar { height: 17px; flex: none; background: linear-gradient(#464541, #3c3b37); display: grid; grid-template-columns: 1fr auto 1fr; align-items: center; }
.winbtns { display: flex; gap: 3px; padding-left: 3px; }
.wb { width: 10px; height: 10px; border-radius: 50%; background: #6e6c65; color: #36352f; font-size: 8px; line-height: 10px; text-align: center; }
.wb-close { background: #e8603a; color: #5a200c; }
.wintitle { font-size: 9.500px; font-weight: 600; color: #dfdbd2; grid-column: 2; }

.menubar { height: 16px; flex: none; background: #3c3b37; color: #cfcbc3; font-size: 10px; line-height: 16px; display: flex; padding-left: 5px; border-bottom: 1px solid #33322e; }
.m1 { width: 24px; } .m2 { width: 27px; } .m3 { width: 30px; } .m4 { width: 33px; } .m5 { width: 38px; }
.m6 { width: 29px; } .m7 { width: 28px; } .m8 { width: 37px; } .m9 { width: 56px; } .m10 { width: 30px; }

.toolbar { height: 24px; flex: none; display: flex; align-items: center; background: #f2f1ef; }
.ti { width: 19.100px; height: 20px; flex: none; display: flex; align-items: center; justify-content: center; border-radius: 3px; }
.ti .i16 { width: 14px; height: 14px; }
.ti.on, .si.on, .tl.on { background: #e3e2de; box-shadow: inset 0 0 0 1px #c4c3be; }
.ddarrow { width: 0; height: 0; border: 3px solid transparent; border-top: 4px solid #777; border-bottom: 0; }
.vsep { width: 1px; height: 16px; background: #dcdbd8; flex: none; margin: 0 3.600px; }
.vsep.sm { margin: 0 1px 0 2px; }
.vsep.tall { height: 19px; margin: 0 2px 0 0; }
.flabel { color: #777; font-size: 9px; flex: none; }
.fl-x { margin: 0 2.500px 0 5.500px; }

.spin, .drop { display: inline-flex; align-items: center; flex: none; height: 16px; background: #fff; border: 1px solid #c8c6c1; border-radius: 3px; font-size: 9.500px; color: #555; position: relative; overflow: hidden; }
.spin b { font-weight: 400; padding-left: 3px; flex: 1; white-space: nowrap; overflow: hidden; }
.spin em { flex: none; width: 11px; height: 100%; background: #efeeec; border-left: 1px solid #dad9d5; position: relative; }
.spin em::before, .drop em::before { content: ""; position: absolute; left: 3px; top: 3px; border: 2.500px solid transparent; border-bottom: 3px solid #666; border-top: 0; }
.spin em::after, .drop em::after { content: ""; position: absolute; left: 3px; bottom: 3px; border: 2.500px solid transparent; border-top: 3px solid #666; border-bottom: 0; }
.drop { background: linear-gradient(#f8f7f6, #e8e7e4); padding-left: 3px; justify-content: space-between; }
.drop em { flex: none; width: 12px; height: 100%; position: relative; }
.sw-coord { width: 44px; font-size: 8.500px; }
.sw-coord b { padding-left: 2px; }
.sw-unit { width: 32px; margin-left: 2px; }
.sw-val { width: 80px; }
.sw-dd { width: 40px; margin-left: 7px; }

.middle { flex: 1; min-height: 0; display: flex; }
.tools { width: 22px; flex: none; display: flex; flex-direction: column; align-items: center; padding-top: .500px; }
.tl { width: 20px; height: 20.700px; flex: none; display: flex; align-items: center; justify-content: center; border-radius: 3px; }
.tl .i16 { width: 17px; height: 17px; }
.tl.on { height: 20px; margin: .350px 0; }
.glyph-a { font: 700 19px/20px "Liberation Serif", serif; color: #111; }
.glyph-t { font: 700 17px/20px "Liberation Serif", serif; color: #111; }
.glyph-t.small { font-size: 16px; line-height: 14px; }

.work { width: 886px; flex: none; display: grid; grid-template-columns: 14px 854px 18px; grid-template-rows: 12px 560px 1fr; }
.corner { display: flex; justify-content: flex-end; padding: 1px 2px 0 0; }
.i-lock { width: 9px; height: 9px; }
.ruler-h { position: relative; border-bottom: 1px solid #9a9995;
  background-image:
    linear-gradient(to right, #777 1px, transparent 1px),
    linear-gradient(to right, #888 1px, transparent 1px),
    linear-gradient(to right, #999 1px, transparent 1px);
  background-repeat: repeat-x;
  background-size: 313.500px 11px, 39.190px 5px, 7.838px 2.500px;
  background-position: 190px bottom, 3.800px bottom, 3.800px bottom; }
.rl { position: absolute; top: 0; font-size: 7px; line-height: 9px; color: #666; }
.rl63 { left: 191.500px; } .rl64 { left: 505px; } .rl65 { left: 818.500px; }
.mark-h { position: absolute; left: 441px; bottom: 0; border: 4px solid transparent; border-top: 4px solid #444; border-bottom: 0; }
.vscroll { grid-row: 1 / 3; grid-column: 3; position: relative; background: linear-gradient(to right, #e8e7e4, #dfdedb); margin-right: 5px; border-left: 1px solid #c9c8c4; border-right: 1px solid #d6d5d1; display: flex; flex-direction: column; align-items: center; color: #777; font-size: 8px; }
.sb-arrow { line-height: 12px; }
.sb-thumb-v { position: absolute; top: 319px; width: 7px; height: 18px; background: #f5f4f2; border: 1px solid #bcbbb6; border-radius: 4px; }
.sb-round { position: absolute; bottom: 1px; width: 9px; height: 9px; border: 1px solid #bcbbb6; border-radius: 50%; background: #f2f1ef; }
.ruler-v { position: relative; border-right: 1px solid #9a9995; margin-left: 1px;
  background-image:
    linear-gradient(#777 1px, transparent 1px),
    linear-gradient(#888 1px, transparent 1px),
    linear-gradient(#999 1px, transparent 1px);
  background-repeat: repeat-y;
  background-size: 11px 313.500px, 5px 39.190px, 2.500px 7.838px;
  background-position: right 121px, right 3.300px, right 3.300px; }
.rlv { position: absolute; left: 2px; top: 122px; font-size: 6px; line-height: 6px; color: #777; }
.mark-v { position: absolute; right: 0; top: 246px; border: 4px solid transparent; border-left: 4px solid #444; border-right: 0; }
.canvas { min-width: 0; background: #fff; overflow: hidden; }
.drawing { width: 854px; height: 560px; }
.hcell { background: #f2f1ef; }
.hscroll { height: 11px; display: flex; align-items: center; background: linear-gradient(#e2e1de, #dcdbd8); border: 1px solid #d0cfca; border-radius: 5px; position: relative; margin-right: 4px; color: #666; font-size: 8px; }
.sb-btn { width: 11px; height: 9px; flex: none; background: #f7f6f4; border-radius: 4px; line-height: 9px; text-align: center; font-size: 7px; color: #555; }
.sb-end { margin-left: auto; }
.sb-thumb-h { position: absolute; left: 475px; top: -1px; width: 19px; height: 11px; background: #f8f7f5; border: 1px solid #c1c0bb; border-radius: 5px; }
.zcell { color: #bbb; font-size: 9px; line-height: 11px; text-align: center; padding-right: 9px; }

.dock { width: 249px; flex: none; background: #f2f1ef; border-left: 1px solid #d5d4d0; border-right: 1px solid #d5d4d0; border-top: 1px solid #d8d7d3; }
.panel { display: flex; height: 100%; }
.panel-main { width: 229px; flex: none; padding-left: 1px; display: flex; flex-direction: column; }
.panel-head { height: 16px; flex: none; display: flex; align-items: center; padding: 1px 3px 0 1px; font-size: 9.500px; color: #4c4c4c; }
.ph-title { flex: 1; padding-left: 0; }
.ph-btn { width: 9px; height: 9px; margin-left: 7px; background: #ecebe8; border: 1px solid #c4c3be; font-size: 7px; line-height: 7px; text-align: center; color: #666; }
.frame { height: 123px; flex: none; border: 1px solid #d8d7d3; border-radius: 2px; padding: 3px 2px 0 3px; }
.tabs { display: flex; gap: 1px; height: 17px; }
.tab { display: flex; align-items: center; justify-content: center; padding: 0 3px; border: 1px solid #dcdbd7; border-bottom: 0; border-radius: 3px 3px 0 0; background: #e8e7e4; color: #777; font-size: 9.500px; }
.tab:nth-child(1) { width: 31px; } .tab:nth-child(2) { width: 30px; } .tab:nth-child(3) { width: 37px; } .tab:nth-child(4) { width: 30px; } .tab:nth-child(5) { width: 36px; }
.tab.act { background: #f6f5f4; color: #4c4c4c; }
.page { height: 60px; border: 1px solid #dcdbd7; background: #f6f5f4; padding: 1px 0 0 1px; border-radius: 0 2px 2px 2px; }
.row { height: 20px; display: flex; align-items: center; }
.i-mv { width: 18px; height: 15px; margin-right: 1px; }
.lb { width: 56px; text-align: right; padding-right: 8px; flex: none; color: #555; }
.chk-row { display: flex; align-items: center; gap: 3px; height: 16px; color: #555; padding-left: 2px; white-space: nowrap; font-size: 9.300px; }
.chk { width: 10px; height: 10px; flex: none; border: 1px solid #bdbcb7; border-radius: 2px; background: #fbfafa; color: #fff; font-size: 8px; line-height: 8px; text-align: center; }
.chk.on { background: #e8734a; border-color: #c85a34; color: #5a2a10; }
.chk-out { height: 18px; padding-left: 0; gap: 5px; }
.actions { display: flex; justify-content: flex-end; gap: 6px; padding-right: 5px; margin-top: 2px; }
.btn { width: 53px; height: 17px; display: flex; align-items: center; justify-content: center; background: linear-gradient(#faf9f8, #e8e7e4); border: 1px solid #c8c7c2; border-radius: 3px; color: #555; }
.dock-item { height: 15px; flex: none; margin-top: 1.500px; display: flex; align-items: center; padding: 0 3px 0 2px; border: 1px solid #d3d2ce; border-radius: 3px; background: linear-gradient(#f9f8f7, #ecebe8); color: #555; font-size: 9.500px; }
.panel-main .frame + .dock-item { margin-top: 3.500px; }
.dock-item.cur { background: linear-gradient(#e0dfdc, #cfcecb); color: #666; }
.tri { margin-left: auto; font-size: 7px; color: #aaa; }
.cur .tri { color: #555; }
.grip { height: 3px; width: 9px; margin: 3px auto 0; background: repeating-linear-gradient(to right, #ccc 0 1px, transparent 1px 3px); }
.vtab { width: 18px; flex: none; display: flex; flex-direction: column; align-items: center; padding-top: 4px; }
.vtab-t { writing-mode: vertical-rl; transform: rotate(180deg); white-space: nowrap; font-size: 9.500px; color: #4c4c4c; }

.cmd { width: 22px; flex: none; display: flex; flex-direction: column; align-items: center; padding-top: .500px; }
.ci { width: 20px; height: 19.600px; flex: none; display: flex; align-items: center; justify-content: center; }
.ci .i16, .si .i16 { width: 14px; height: 14px; }
.hsep { width: 12px; height: 7.400px; flex: none; position: relative; }
.hsep::after { content: ""; position: absolute; left: 0; right: 0; top: 3.500px; height: 1px; background: #e0dfdc; }
.snap { width: 21px; flex: none; display: flex; flex-direction: column; align-items: center; padding-top: .500px; }
.si { width: 20px; height: 19.600px; flex: none; display: flex; align-items: center; justify-content: center; border-radius: 3px; }
.hsep.s6 { height: 6px; } .hsep.s8 { height: 8px; }

.palette { height: 13px; flex: none; display: flex; align-items: stretch; background: #dfdedb; margin-top: 1px; }
.nocolor { width: 11px; flex: none; background: #fff; }
.x-mark { width: 11px; height: 13px; }
.swatches { width: 1181px; flex: none; display: flex; overflow: hidden; }
.swatches i { width: 10.375px; flex: none; }
.pal-arrow { flex: 1; color: #555; font-size: 9px; line-height: 13px; text-align: center; background: #f2f1ef; }
.palscroll { height: 9px; flex: none; display: flex; align-items: center; background: linear-gradient(#dfdedb, #d7d6d3); padding: 0 0 0 2px; position: relative; }
.ps-thumb { width: 318px; height: 9px; background: #f3f2f0; border: 1px solid #cfcec9; border-radius: 5px; }

.status { height: 19px; flex: none; display: flex; align-items: center; background: #f2f1ef; font-size: 9.500px; white-space: nowrap; }
.fs-labels { width: 35px; flex: none; display: flex; flex-direction: column; padding-left: 1px; font-size: 8px; line-height: 9.500px; color: #888; }
.fs-vals { width: 46px; flex: none; display: flex; flex-direction: column; font-size: 7.500px; line-height: 9.500px; color: #555; }
.fv1 { padding-left: 8px; font-weight: 700; }
.fv2 b { font-weight: 700; }
.fv2 .sw { margin-left: 8px; }
.fl-o { margin: 0 2px; width: 8px; }
.sw-o { width: 30px; }
.i-eye { width: 10px; height: 8px; margin: 0 4px 0 2px; }
.i-lk { width: 8px; height: 9px; margin: 0 5px 0 2px; }
.sw-layer { width: 55px; height: 17px; margin-right: 1px; }
.sw-layer strong { font-weight: 700; font-size: 8.500px; white-space: nowrap; }
.msg { font-size: 9.250px; color: #555; }
.msg b { font-weight: 700; }
.spring { flex: 1; }
.coords { width: 47px; flex: none; display: grid; grid-template-columns: 18px 29px; grid-auto-rows: 10px; font-size: 8px; line-height: 10px; color: #666; }
.cv { font-size: 8.500px; letter-spacing: .2px; }
.fl-z { margin: 0 1px 0 2px; }
.sw-z { width: 34px; margin-right: 1px; }
.sw-z b { overflow: hidden; }
```
